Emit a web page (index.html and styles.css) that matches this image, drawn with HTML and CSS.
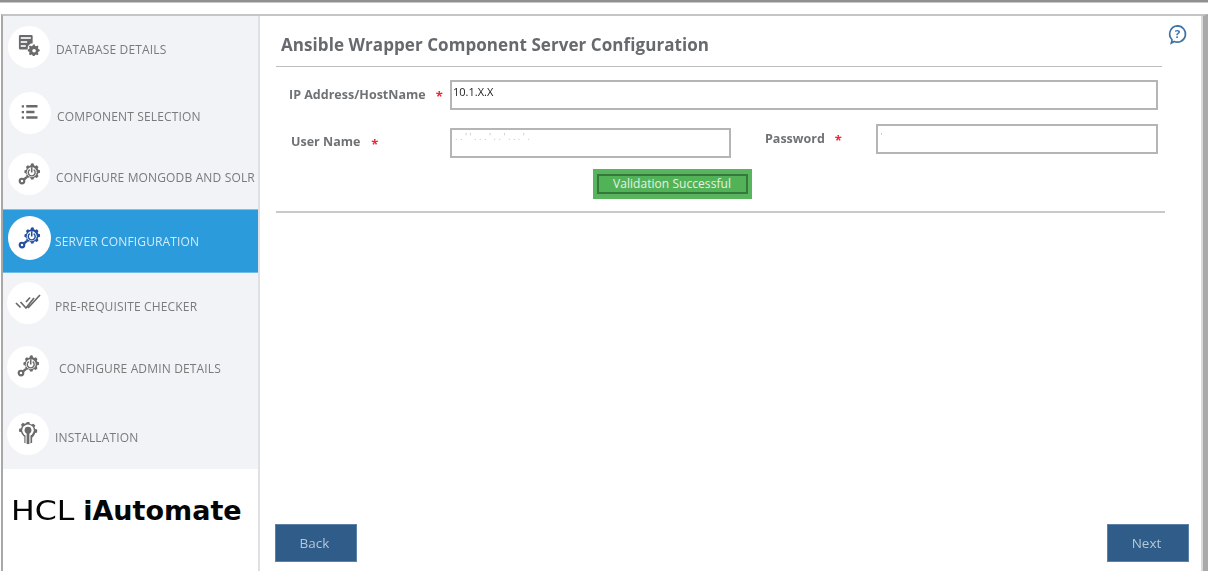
FILE: index.html
```html
<!DOCTYPE html>
<html lang="en">
<head>
<meta charset="utf-8">
<title>HCL iAutomate</title>
<link rel="stylesheet" href="styles.css">
</head>
<body>
<svg class="defs" width="0" height="0" aria-hidden="true">
  <symbol id="i-db" viewBox="0 0 24 24">
    <path d="M1 2.500A1.500 1.500 0 0 1 2.500 1h12A1.500 1.500 0 0 1 16 2.500V10a6 6 0 0 0-5.500 7H2.500A1.500 1.500 0 0 1 1 15.500z" fill="currentColor"/>
    <path d="M3 3.200h11v2.200H3zM3 7.600h7v2.200H3zM3 12h5.500v2.200H3z" fill="#e4e5e8"/>
    <path d="M17 10.500l1 .1.500 1.700 1.300.6 1.600-.8 1.300 1.300-.8 1.600.6 1.300 1.500.5v2l-1.600.5-.5 1.300.8 1.500-1.400 1.400-1.500-.8-1.300.5-.5 1.600h-2l-.5-1.600-1.300-.5-1.500.8-1.400-1.400.8-1.500-.5-1.300-1.600-.5v-2l1.500-.5.600-1.300-.8-1.600 1.300-1.300 1.600.8 1.300-.6z" transform="translate(1.500 1.500) scale(.92)" fill="currentColor"/>
    <circle cx="17.500" cy="18.300" r="2" fill="#fff"/>
  </symbol>
  <symbol id="i-list" viewBox="0 0 24 24">
    <path d="M1 3h3v3H1zM1 10.500h3v3H1zM1 18h3v3H1z" fill="currentColor"/>
    <path d="M7 2.800h15v3.200H7zM7 10.300h11v3.200H7zM7 17.800h15v3.200H7z" fill="currentColor"/>
  </symbol>
  <symbol id="i-gauge" viewBox="0 0 26 26">
    <path d="M16 1.500l1.600.3.500 2 1.300.7 1.900-.8 1.900 1.900-.9 1.800.6 1.300 2 .7v2.800l-2 .6-.6 1.400.9 1.800-1.900 2-1.900-.9-1.300.6-.6 2h-2.800l-.6-2-1.400-.6-1.800.9-1.900-1.900.9-1.900-.6-1.300-2-.6v-2.800l2-.6.600-1.400-.9-1.800 1.900-1.900 1.900.8 1.300-.6.600-2z" fill="currentColor"/>
    <circle cx="15.500" cy="11.500" r="5.600" fill="#fff"/>
    <path d="M13.300 8.600a3.900 3.900 0 1 0 4.400 0" fill="none" stroke="currentColor" stroke-width="1.600"/>
    <path d="M14.600 6h1.800v6h-1.800z" fill="currentColor"/>
    <path d="M7 19.500l3-2.500" stroke="currentColor" stroke-width="2.600"/>
    <circle cx="4.500" cy="21.500" r="2.600" fill="#fff" stroke="currentColor" stroke-width="2.400"/>
  </symbol>
  <symbol id="i-check" viewBox="0 0 26 20">
    <path d="M1 10l4.500 4.500M5.500 9l5.500 6 8-10M11 9l4-4.500M13 15L25 2" fill="none" stroke="currentColor" stroke-width="1.700"/>
  </symbol>
  <symbol id="i-bulb" viewBox="0 0 24 26">
    <path d="M10.500 1h3l.5 2 2 .8 1.800-1 2.200 2.100-1 1.800.8 2 2.200.6v3.200l-2.200.6-.8 2-1.300 1.800-1.200 1.300V24h-1.500l-1 1.500h-3L9.500 24H8v-6.800l-1.200-1.300-1.500-1.800-.8-2-2.200-.6V8.300l2.200-.6.800-2-1-1.800 2.200-2.100 1.800 1 2-.8z" fill="currentColor"/>
    <circle cx="12" cy="10" r="6.300" fill="#fff"/>
    <path d="M9.300 14h5.400v12H9.300z" fill="#fff"/>
    <circle cx="12" cy="10" r="3.700" fill="currentColor"/>
    <path d="M10.500 12h3v13h-3z" fill="currentColor"/>
  </symbol>
</svg>

<div class="top-rule"></div>
<div class="frame">
  <aside class="sidebar">
    <nav class="steps">
      <div class="step step-db"><span class="badge"><svg class="icon icon-db"><use href="#i-db"/></svg></span><span class="step-label">DATABASE DETAILS</span></div>
      <div class="step step-comp"><span class="badge"><svg class="icon icon-list"><use href="#i-list"/></svg></span><span class="step-label">COMPONENT SELECTION</span></div>
      <div class="step step-mongo"><span class="badge"><svg class="icon icon-gauge"><use href="#i-gauge"/></svg></span><span class="step-label">CONFIGURE MONGODB AND SOLR</span></div>
      <div class="step step-server active"><span class="badge"><svg class="icon icon-gauge"><use href="#i-gauge"/></svg></span><span class="step-label">SERVER CONFIGURATION</span></div>
      <div class="step step-pre"><span class="badge"><svg class="icon icon-check"><use href="#i-check"/></svg></span><span class="step-label">PRE-REQUISITE CHECKER</span></div>
      <div class="step step-admin"><span class="badge"><svg class="icon icon-gauge"><use href="#i-gauge"/></svg></span><span class="step-label">CONFIGURE ADMIN DETAILS</span></div>
      <div class="step step-install"><span class="badge"><svg class="icon icon-bulb"><use href="#i-bulb"/></svg></span><span class="step-label">INSTALLATION</span></div>
    </nav>
    <div class="brand"><span class="brand-hcl">HCL</span><strong>iAutomate</strong></div>
  </aside>

  <main class="content">
    <div class="top-area">
      <section class="panel">
        <h1 class="title">Ansible Wrapper Component Server Configuration</h1>
        <div class="row-ip">
          <label class="label label-ip">IP Address/HostName<span class="req">*</span></label>
          <input class="field field-ip" type="text" value="10.1.X.X">
        </div>
        <div class="row-creds">
          <label class="label label-user">User Name<span class="req req-user">*</span></label>
          <input class="field field-user" type="text" value=". . ' ' . . . ' . . ' . . . ' .">
          <label class="label label-pass">Password<span class="req">*</span></label>
          <input class="field field-pass" type="text" value="'">
        </div>
        <div class="row-validate">
          <button class="validate" type="button"><span class="validate-inner">Validation Successful</span></button>
        </div>
      </section>
      <a class="help" href="#" aria-label="Help">
        <svg viewBox="0 0 22 22" width="21" height="21">
          <path d="M11 2a8.500 8.500 0 1 1-3.500 16.300L4.500 20l.8-3.500A8.500 8.500 0 0 1 11 2z" fill="none" stroke="#3f73a6" stroke-width="1.700"/>
          <text x="11" y="15" text-anchor="middle" class="help-mark">?</text>
        </svg>
      </a>
    </div>
    <div class="actions">
      <button class="nav-btn" type="button">Back</button>
      <button class="nav-btn" type="button">Next</button>
    </div>
  </main>
</div>
</body>
</html>
```

FILE: styles.css
```css
* { box-sizing: border-box; }

html, body {
  margin: 0;
  height: 571px;
  overflow: hidden;
  background: #fff;
  font-family: "Open Sans", "Noto Sans", sans-serif;
}

.defs { display: block; height: 0; }

.top-rule {
  height: 3px;
  background: #8f8f8f;
  border-bottom: 1px solid #c9c9c9;
}

.frame {
  margin: 11px 0 0 1px;
  height: 557px;
  display: flex;
  border-top: 2px solid #c4c4c4;
  border-left: 2px solid #a8a8a8;
  border-right: 5px solid #a9a9a9;
}

/* Sidebar */
.sidebar {
  width: 257px;
  flex: none;
  display: flex;
  flex-direction: column;
  border-right: 2px solid #dfe0e4;
}

.steps {
  background: #f2f3f7;
  display: flex;
  flex-direction: column;
  filter: blur(0.4px);
}

.step {
  display: flex;
  align-items: center;
  color: #6a6a6a;
}

.step-db { height: 66px; padding: 0 0 5px 5px; }
.step-comp { height: 65px; padding: 0 0 3px 6px; }
.step-mongo { height: 62px; padding: 0 0 8px 5px; }
.step-server { height: 64px; padding: 0 0 6px 5px; }
.step-pre { height: 65px; padding: 0 0 5px 4px; }
.step-admin { height: 63px; padding: 0 0 6px 4px; }
.step-install { height: 68px; padding: 0 0 3px 4px; }

.step-label {
  font-size: 12px;
  font-weight: 400;
  color: #7a7a7a;
  letter-spacing: 0.15px;
  white-space: nowrap;
  margin-left: 6px;
  margin-top: 6px;
}

.step-mongo .step-label { margin-top: 7px; }
.step-admin .step-label { margin-left: 10px; margin-top: 4px; }
.step-pre .step-label { margin-top: 7px; }
.step-install .step-label { margin-top: 8px; }

.badge {
  width: 42px;
  height: 42px;
  flex: none;
  border-radius: 50%;
  background: #fff;
  display: flex;
  align-items: center;
  justify-content: center;
}

.step.active {
  background: #2b9bdc;
  border-top: 1px solid #7cc2ea;
  border-bottom: 1px solid #6fbce8;
}

.step.active .badge { width: 43px; height: 44px; color: #244f9e; }
.step.active .step-label { color: #d5ebf9; margin-left: 4px; }

.icon { display: block; }
.icon-db { width: 22px; height: 22px; margin: -3px 0 0 0; }
.icon-list { width: 18px; height: 18px; margin-top: -2px; }
.icon-gauge { width: 23px; height: 23px; margin-top: -2px; }
.icon-check { width: 26px; height: 20px; }
.icon-bulb { width: 22px; height: 24px; margin-top: -2px; }

.brand {
  flex: 1;
  background: #fff;
  padding: 25px 0 0 8px;
  font-family: "DejaVu Sans", "Liberation Sans", sans-serif;
  font-size: 27px;
  line-height: 34px;
  color: #050505;
  white-space: nowrap;
}

.brand strong { font-weight: 700; }

.brand-hcl {
  display: inline-block;
  font-weight: 400;
  margin-right: 18px;
  transform: scaleX(1.17);
  transform-origin: left center;
}

/* Main */
.content {
  flex: 1;
  display: flex;
  flex-direction: column;
  padding: 0 12px 9px 16px;
  min-width: 0;
  border-right: 2px solid #d9d9d9;
}

.top-area { display: flex; }

.panel {
  width: 889px;
  flex: none;
  border-bottom: 2px solid #c9c9c9;
  height: 197px;
  filter: blur(0.35px);
}

.title {
  margin: 0;
  width: 886px;
  height: 51px;
  padding: 16px 0 0 5px;
  font-size: 17px;
  font-weight: 700;
  line-height: 26px;
  color: #66696d;
  letter-spacing: 0.07px;
  white-space: nowrap;
  border-bottom: 1px solid #bdbdbd;
}

.label {
  font-size: 12.500px;
  font-weight: 700;
  color: #6f7275;
  white-space: nowrap;
}

.req {
  color: #f0243a;
  font-size: 13px;
  margin-left: 10px;
  vertical-align: -2px;
}

.req-user { margin-left: 11px; vertical-align: -3px; }

.row-ip {
  display: flex;
  margin-top: 13px;
  align-items: flex-start;
}

.label-ip { width: 161px; margin-left: 13px; padding-top: 6px; flex: none; }

.field {
  display: block;
  height: 30px;
  border: 2px solid #b5b5b5;
  background: #fff;
  outline: none;
  font-family: "Open Sans", sans-serif;
  padding: 0 0 8px 1px;
  color: #222;
  font-size: 11px;
}

.field-ip { width: 708px; }

.row-creds {
  display: flex;
  align-items: flex-start;
  margin-top: 14px;
}

.label-user { width: 159px; margin-left: 15px; padding-top: 9px; flex: none; }
.field-user { width: 281px; margin-top: 4px; color: #c4c4c4; padding: 0 0 14px 3px; font-size: 9.500px; }
.label-pass { width: 111px; margin-left: 34px; flex: none; padding-top: 6px; }
.field-pass { width: 282px; color: #999; font-size: 7px; padding-left: 3px; }

.row-validate {
  width: 792px;
  display: flex;
  justify-content: center;
  margin-top: 11px;
}

.validate {
  width: 159px;
  height: 30px;
  padding: 5px 4px;
  border: 0;
  background: #58b55e;
  display: block;
}

.validate-inner {
  display: block;
  height: 100%;
  border: 2px solid #35773d;
  background: #52b258;
  color: #e3f3e4;
  font-family: "Open Sans", sans-serif;
  font-size: 12px;
  line-height: 15px;
  letter-spacing: 0.05px;
  text-align: center;
}

.help {
  display: block;
  margin: 8px 0 0 2px;
  height: 21px;
  filter: blur(0.3px);
}

.help-mark {
  font-family: "Open Sans", sans-serif;
  font-size: 12px;
  font-weight: 700;
  fill: #3f73a6;
}

.actions {
  margin: auto 0 0 -1px;
  display: flex;
  justify-content: space-between;
}

.nav-btn {
  width: 82px;
  height: 38px;
  border: 1px solid #5d82a8;
  background: #2f5c88;
  color: #b3c7d9;
  font-family: "Open Sans", sans-serif;
  font-size: 13.500px;
  padding: 0 3px 0 0;
  filter: blur(0.3px);
}
```
